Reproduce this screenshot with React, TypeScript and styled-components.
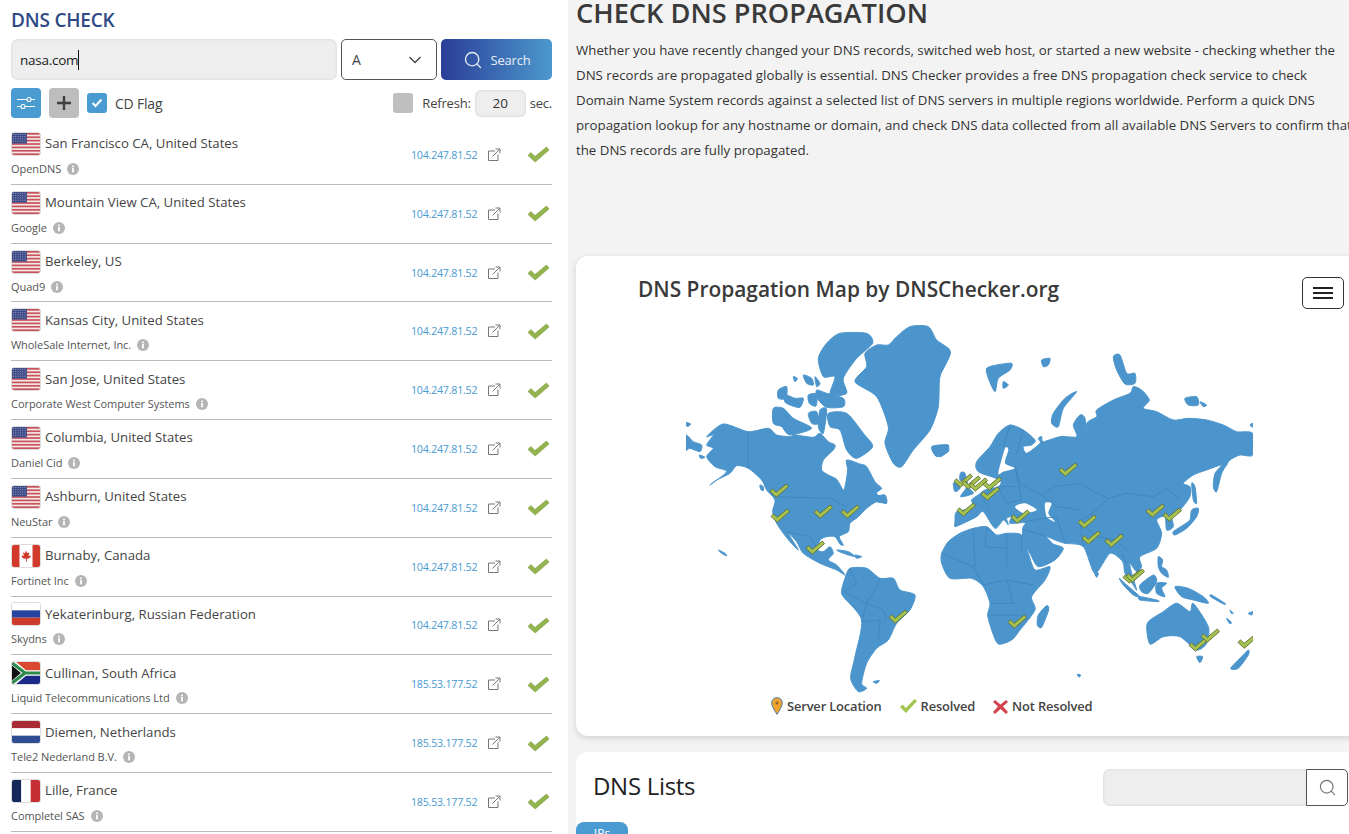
import type { FC } from "react";

import { Search } from "lucide-react";
import styled, { createGlobalStyle } from "styled-components";

const GlobalStyle = createGlobalStyle`
  html, body {
    margin: 0;
    height: 100%;
    overflow: hidden;
    background: #f3f3f3;
    font-family: "Open Sans", "Noto Sans", sans-serif;
    color: #333;
  }
  * { box-sizing: border-box; }
`;

const Page = styled.div`
  display: flex;
  width: 1349px;
  height: 834px;
  overflow: hidden;
`;

const LeftPanel = styled.aside`
  flex: 0 0 568px;
  height: 834px;
  overflow: hidden;
  background: #fff;
  padding: 9px 16px 0 11px;
`;

const CheckTitle = styled.h2`
  margin: 0 0 7px;
  font-size: 19px;
  line-height: 23px;
  font-weight: 600;
  letter-spacing: -0.2px;
  color: #2f4a86;
`;

const SearchBar = styled.div`
  display: flex;
  gap: 4px;
  height: 41px;
`;

const DomainField = styled.div`
  flex: 0 0 326px;
  display: flex;
  align-items: center;
  padding-left: 9px;
  border-radius: 7px;
  background: #eee;
  box-shadow: inset 0 0 3px rgba(0, 0, 0, 0.12);
  font-size: 13.5px;
  letter-spacing: -0.25px;
  color: #222;
`;

const Caret = styled.span`
  width: 1px;
  height: 20px;
  background: #111;
`;

const TypeSelect = styled.div`
  flex: 0 0 96px;
  display: flex;
  align-items: center;
  justify-content: space-between;
  padding: 0 14px 0 10px;
  border: 1px solid #555;
  border-radius: 5px;
  font-size: 14px;
  color: #444;
`;

const SearchButton = styled.button`
  flex: 0 0 111px;
  display: flex;
  align-items: center;
  justify-content: center;
  gap: 8px;
  border: 0;
  border-radius: 5px;
  background: linear-gradient(90deg, #2a3e98, #4c98cd);
  color: #e8eef6;
  font: inherit;
  font-size: 13px;
  letter-spacing: -0.2px;
`;

const OptionsBar = styled.div`
  display: flex;
  align-items: center;
  height: 30px;
  margin-top: 8px;
`;

const SquareButton = styled.div<{ $tone: "blue" | "grey" }>`
  display: flex;
  align-items: center;
  justify-content: center;
  width: 30px;
  height: 30px;
  margin-right: 8px;
  border-radius: 4px;
  background: ${(p) => (p.$tone === "blue" ? "#4a9bd1" : "#bdbdbd")};
`;

const CheckBox = styled.div<{ $checked?: boolean }>`
  display: flex;
  align-items: center;
  justify-content: center;
  width: 20px;
  height: 20px;
  border-radius: 3px;
  background: ${(p) => (p.$checked ? "#4a9bd1" : "#bfbfbf")};
`;

const OptionLabel = styled.span`
  font-size: 13px;
  letter-spacing: -0.2px;
  color: #444;
`;

const FlagLabel = styled(OptionLabel)`
  margin-left: 8px;
  font-size: 14px;
`;

const RefreshGroup = styled.div`
  display: flex;
  align-items: center;
  margin-left: auto;
`;

const RefreshLabel = styled(OptionLabel)`
  margin-left: 9px;
`;

const RefreshInput = styled.div`
  width: 51px;
  height: 27px;
  margin: 0 4px;
  border-radius: 6px;
  background: #eee;
  box-shadow: inset 0 0 3px rgba(0, 0, 0, 0.12);
  font-size: 13.5px;
  line-height: 27px;
  text-align: center;
  color: #333;
`;

const ServerList = styled.div`
  margin-top: 8px;
`;

const ServerRow = styled.div`
  display: grid;
  grid-template-columns: 1fr 77px 40px 25px;
  align-items: center;
  height: 58.82px;
  border-bottom: 1px solid #bbb;
`;

const ServerInfo = styled.div`
  display: flex;
  flex-direction: column;
  gap: 6px;
  margin-top: -2px;
`;

const Location = styled.div`
  display: flex;
  align-items: center;
  gap: 4px;
  height: 24px;
  font-size: 13.2px;
  color: #444;
`;

const LocationText = styled.span`
  margin-top: -1px;
`;

const Provider = styled.div`
  display: flex;
  align-items: center;
  gap: 6px;
  font-size: 11px;
  letter-spacing: -0.05px;
  line-height: 14px;
  color: #555;
`;

const IpAddress = styled.span`
  padding-left: 1px;
  font-size: 10.7px;
  letter-spacing: -0.25px;
  color: #4a9bd1;
`;

const FlagFrame = styled.svg`
  width: 30px;
  height: 24px;
  flex: none;
  border-radius: 3px;
  border: 1px solid #ddd;
`;

const RightPanel = styled.main`
  flex: 1;
  min-width: 0;
  overflow: hidden;
  padding-left: 8px;
`;

const PageTitle = styled.h1`
  margin: -5px 0 0;
  font-size: 27.2px;
  line-height: 36px;
  font-weight: 600;
  white-space: nowrap;
  color: #3a3a3a;
`;

const Intro = styled.p`
  margin: 7px 0 0;
  height: 218px;
  font-size: 13.27px;
  line-height: 25px;
  white-space: nowrap;
  color: #333;
`;

const MapCard = styled.section`
  width: 800px;
  height: 480px;
  border-radius: 12px;
  background: #fff;
  box-shadow: 0 2px 6px rgba(0, 0, 0, 0.14);
`;

const MapHeader = styled.div`
  display: flex;
  align-items: center;
  justify-content: space-between;
  width: 773px;
  height: 69px;
  padding: 0 5px 0 62px;
`;

const MapTitle = styled.h3`
  margin: 0 0 3px;
  font-size: 20.9px;
  font-weight: 600;
  color: #3a3a3a;
`;

const MenuButton = styled.div`
  display: flex;
  flex-direction: column;
  align-items: center;
  justify-content: center;
  gap: 3px;
  width: 42px;
  height: 32px;
  margin-top: 4px;
  border: 1px solid #333;
  border-radius: 5px;
`;

const MenuLine = styled.span`
  width: 20px;
  height: 2px;
  background: #222;
`;

const WorldMap = styled.svg`
  display: block;
  width: 567px;
  height: 370px;
  margin-left: 110px;
`;

const Legend = styled.div`
  display: flex;
  align-items: center;
  height: 22px;
  margin: 0 0 0 195px;
  font-size: 12.9px;
  font-weight: 600;
  letter-spacing: -0.15px;
  color: #444;
`;

const LegendItem = styled.span`
  display: flex;
  align-items: center;
  gap: 4px;
  margin-right: 18px;
  white-space: nowrap;
`;

const ListCard = styled.section`
  width: 800px;
  height: 120px;
  margin-top: 16px;
  border-radius: 12px 12px 0 0;
  background: #fff;
`;

const ListHeader = styled.div`
  display: flex;
  align-items: center;
  justify-content: space-between;
  width: 772px;
  height: 70px;
  padding: 0 0 0 17px;
`;

const ListTitle = styled.h3`
  margin: 0 0 4px;
  font-size: 24px;
  font-weight: 500;
  letter-spacing: -0.3px;
  color: #222;
`;

const ListSearch = styled.div`
  display: flex;
`;

const ListSearchInput = styled.div`
  width: 204px;
  height: 37px;
  border-radius: 7px 0 0 7px;
  background: #eee;
  box-shadow: inset 0 0 3px rgba(0, 0, 0, 0.12);
`;

const ListSearchButton = styled.div`
  display: flex;
  align-items: center;
  justify-content: center;
  width: 42px;
  height: 37px;
  margin-left: -1px;
  border: 1px solid #555;
  border-radius: 0 5px 5px 0;
  color: #777;
`;

const TabButton = styled.div`
  width: 52px;
  height: 30px;
  border-radius: 8px 8px 0 0;
  background: #4a9bd1;
  font-size: 12px;
  line-height: 24px;
  text-align: center;
  color: #fff;
`;

const CHECK_POINTS = "0,8.5 2.8,5.5 7,9.5 18.5,0 21,3 7.2,15";

const ListCheck: FC = () => (
  <svg width="23" height="17" viewBox="-1 -1 23 17">
    <polygon points={CHECK_POINTS} fill="#93b44c" stroke="#7d9a44" strokeWidth="0.6" />
  </svg>
);

const ExternalIcon: FC = () => (
  <svg width="14" height="14" viewBox="0 0 14 14" fill="none" stroke="#777" strokeWidth="1">
    <path d="M8 3H1.5v9.5H11V6.5" />
    <path d="M5.5 8.5L12.5 1.5M8.5 1h4.500v4.500" />
  </svg>
);

const InfoIcon: FC = () => (
  <svg width="12" height="12" viewBox="0 0 12 12">
    <circle cx="6" cy="6" r="6" fill="#b5b5b5" />
    <rect x="5.1" y="5" width="1.8" height="4.3" fill="#fff" />
    <rect x="5.1" y="2.6" width="1.8" height="1.6" fill="#fff" />
  </svg>
);

type FlagCode = "us" | "ca" | "ru" | "za" | "nl" | "fr";

const Flag: FC<{ code: FlagCode }> = ({ code }) => (
  <FlagFrame viewBox="0 0 30 24" preserveAspectRatio="none">
    {code === "us" && (
      <>
        <rect width="30" height="24" fill="#f4e9e9" />
        {[0, 3.7, 7.4, 11.1, 14.8, 18.5, 22.2].map((y) => (
          <rect key={y} y={y} width="30" height="1.85" fill="#c9525a" />
        ))}
        <rect width="16" height="11.5" fill="#3c4a86" />
        {[1.5, 4, 6.5, 9].map((y) => (
          <line key={y} x1="1" x2="15" y1={y} y2={y} stroke="#aab2d2" strokeWidth="1" strokeDasharray="1 1.500" />
        ))}
      </>
    )}
    {code === "ca" && (
      <>
        <rect width="30" height="24" fill="#fff" />
        <rect width="8" height="24" fill="#d23b2c" />
        <rect x="22" width="8" height="24" fill="#d23b2c" />
        <path d="M15 6l1.500 3 2-1-.8 4 1.800-.6.5 1.600-2.500 2-1.500-.2V18h-1v-3.200l-2.200.2-2.500-2 .6-1.600 1.700.6-.7-4 2 1z" fill="#d23b2c" />
      </>
    )}
    {code === "ru" && (
      <>
        <rect width="30" height="8" fill="#fff" />
        <rect y="8" width="30" height="8" fill="#24429e" />
        <rect y="16" width="30" height="8" fill="#cb3a2a" />
      </>
    )}
    {code === "za" && (
      <>
        <rect width="30" height="12" fill="#d9492f" />
        <rect y="12" width="30" height="12" fill="#1b2a86" />
        <path d="M0 0l14 12L0 24z" fill="#111" />
        <path d="M0 0l14 12h16M0 24l14-12" stroke="#fff" strokeWidth="6" fill="none" />
        <path d="M0 1l14 11h16M0 23l14-11" stroke="#2f8a4e" strokeWidth="3.5" fill="none" />
        <path d="M0 5l8 7-8 7z" fill="#111" />
      </>
    )}
    {code === "nl" && (
      <>
        <rect width="30" height="8" fill="#a92b35" />
        <rect y="8" width="30" height="8" fill="#fff" />
        <rect y="16" width="30" height="8" fill="#2f4d92" />
      </>
    )}
    {code === "fr" && (
      <>
        <rect width="10" height="24" fill="#14285c" />
        <rect x="10" width="10" height="24" fill="#fff" />
        <rect x="20" width="10" height="24" fill="#c62f36" />
      </>
    )}
  </FlagFrame>
);

const SERVERS: { city: string; provider: string; ip: string; flag: FlagCode }[] = [
  { city: "San Francisco CA, United States", provider: "OpenDNS", ip: "104.247.81.52", flag: "us" },
  { city: "Mountain View CA, United States", provider: "Google", ip: "104.247.81.52", flag: "us" },
  { city: "Berkeley, US", provider: "Quad9", ip: "104.247.81.52", flag: "us" },
  { city: "Kansas City, United States", provider: "WholeSale Internet, Inc.", ip: "104.247.81.52", flag: "us" },
  { city: "San Jose, United States", provider: "Corporate West Computer Systems", ip: "104.247.81.52", flag: "us" },
  { city: "Columbia, United States", provider: "Daniel Cid", ip: "104.247.81.52", flag: "us" },
  { city: "Ashburn, United States", provider: "NeuStar", ip: "104.247.81.52", flag: "us" },
  { city: "Burnaby, Canada", provider: "Fortinet Inc", ip: "104.247.81.52", flag: "ca" },
  { city: "Yekaterinburg, Russian Federation", provider: "Skydns", ip: "104.247.81.52", flag: "ru" },
  { city: "Cullinan, South Africa", provider: "Liquid Telecommunications Ltd", ip: "185.53.177.52", flag: "za" },
  { city: "Diemen, Netherlands", provider: "Tele2 Nederland B.V.", ip: "185.53.177.52", flag: "nl" },
  { city: "Lille, France", provider: "Completel SAS", ip: "185.53.177.52", flag: "fr" },
];

// map outlines are traced at 3x, so each half sits in its own scaled group
const WEST_LAND = [
  "80,350 130,312 205,335 265,325 290,345 330,350 345,345 400,352 420,340 445,365 465,375 460,390 430,420 425,450 445,465 470,478 490,510 497,490 503,450 500,420 540,432 560,440 585,485 605,505 590,520 620,550 590,545 560,565 535,590 510,610 505,635 478,650 490,675 480,672 465,650 440,650 420,660 413,690 430,695 450,680 460,700 445,720 470,735 495,765 470,750 420,730 370,700 350,665 325,640 355,690 330,665 310,640 290,610 278,575 285,540 260,510 245,480 205,445 170,437 150,460 110,480 90,495 140,455 105,440 80,410 100,385 80,375 100,345",
  "510,745 560,745 600,775 640,775 660,810 705,825 690,870 650,910 625,960 590,985 560,1030 545,1090 560,1105 535,1115 512,1075 525,1010 545,900 490,830 485,810 495,775",
  "525,185 560,140 555,100 590,75 625,75 650,50 690,20 745,20 770,60 810,95 780,170 775,260 750,330 700,390 665,440 640,430 615,370 625,320 590,230",
  "440,70 480,40 560,40 578,70 530,115 490,175 500,220 450,225 465,170 430,170 415,115",
  "445,280 500,280 550,340 578,380 530,415 500,390 480,330 450,320",
  "410,210 440,220 490,235 490,260 440,262 412,235",
  "280,265 310,265 340,295 395,325 330,345 305,320 280,310",
  "295,210 320,200 318,235 295,235",
  "318,225 345,235 370,235 360,262 330,255 314,245",
  "385,225 410,222 408,258 388,250",
  "385,280 410,275 415,310 395,310",
  "420,270 440,268 430,340 415,320",
  "340,170 352,175 345,185",
  "370,165 395,175 400,195 380,190",
  "405,170 420,190 410,200",
  "590,530 615,525 620,548 590,545",
  "240,495 250,500 250,512 242,508",
  "470,690 505,695 525,710 490,700",
  "525,705 545,710 530,715",
  "115,690 135,700 140,708 125,700",
  "580,1085 598,1082 590,1090",
  "755,380 800,375 805,395 770,410",
  "18,345 40,365 65,375 60,395 30,385 18,390",
  "18,308 32,312 22,320",
  "58,405 75,412 62,415",
];

const WEST_BORDERS = [
  "205,335 205,445",
  "285,530 450,535 500,560",
  "320,635 390,650 415,690",
  "510,745 530,790 490,815",
  "490,815 560,850 610,870 620,900",
  "545,905 600,900 595,960",
  "560,850 545,905",
  "600,775 590,800 560,850",
];

const EAST_LAND = [
  "45,545 50,515 100,505 95,480 115,465 135,450 175,440 180,420 115,395 110,365 150,320 175,280 210,255 250,270 285,300 275,315 250,320 260,340 300,310 295,295 305,290 310,305 360,290 410,290 400,255 420,225 435,235 440,300 440,250 470,230 470,210 520,180 570,160 580,140 605,150 628,180 610,205 650,215 700,240 745,235 800,240 850,255 890,275 938,280 938,345 900,345 870,360 860,375 845,400 830,455 820,440 825,400 845,375 800,390 760,405 730,430 750,440 750,470 720,510 695,525 700,560 680,570 675,530 650,540 665,580 650,625 600,650 605,680 590,695 570,670 575,700 590,750 580,735 555,700 548,665 510,640 465,700 430,620 375,610 345,600 320,590 340,612 370,625 345,660 295,680 270,640 250,600 248,565 255,548 210,550 215,530 200,535 205,555 190,540 165,565 130,515 110,530 70,550 45,560",
  "5,640 25,605 60,580 100,565 140,560 170,585 200,580 245,585 265,640 285,690 330,680 315,720 275,770 285,810 240,870 215,900 175,912 155,870 143,825 150,790 130,740 95,715 30,715 5,670",
  "622,850 670,815 710,790 750,815 760,790 805,860 800,910 770,930 720,890 670,890 630,912",
  "62,398 75,400 85,440 100,460 62,470 80,440 60,420",
  "40,430 55,425 60,445 45,455",
  "140,85 170,75 215,70 210,90 175,115 165,155 145,115",
  "190,125 205,135 190,145",
  "305,60 330,55 325,75 310,80",
  "335,250 340,220 375,175 410,155 370,205 355,260",
  "520,50 540,45 560,100 585,100 585,130 555,132 530,90",
  "735,175 770,170 775,195 745,195",
  "780,185 800,195 790,200",
  "930,255 938,250 938,262",
  "755,430 765,440 770,490 760,480",
  "700,575 730,555 750,540 755,510 775,505 770,530 740,565 705,585",
  "463,695 475,700 470,712",
  "655,650 668,660 665,680 680,690 685,712 665,700 655,680",
  "538,715 560,735 600,770 580,765 550,735",
  "600,770 650,780 655,785 600,780",
  "600,735 640,705 650,725 625,760 605,755",
  "650,730 680,730 665,745 675,770 650,760",
  "705,740 745,745 790,770 805,790 760,780 725,770",
  "815,765 855,790 850,792 812,770",
  "870,810 880,820 874,820",
  "860,835 875,848 868,850",
  "925,820 940,815 935,825",
  "770,950 788,950 780,968",
  "872,985 905,950 925,930 925,945 895,985",
  "320,797 326,810 305,862 292,855 295,825",
  "412,1003 422,1005 417,1012",
  "0,30 25,25 30,45 0,100",
  "0,320 25,315 22,335 0,350",
];

// seas cut out of the big land shape
const EAST_WATER = [
  "315,490 335,490 325,520 345,545 320,530",
  "225,500 255,490 290,510 250,520",
  "175,400 195,325 205,330 195,370 225,385 190,395",
];

const EAST_BORDERS = [
  "225,380 240,430 305,465 345,440 420,430 460,455 505,475 560,460 640,470 680,445 720,480",
  "505,475 470,510 420,545 470,590 530,600 560,630",
  "305,465 350,500 420,510",
  "350,530 375,610",
  "420,545 430,620",
  "255,545 345,530",
  "255,570 320,590",
  "175,440 200,490 245,480 225,380",
  "130,480 150,510",
  "180,440 225,440",
  "210,255 190,320",
  "250,270 230,340",
  "545,640 560,670",
  "5,640 100,680 130,735",
  "100,565 105,680",
  "140,560 135,620 200,625",
  "200,580 200,680",
  "245,585 245,640",
  "130,735 200,720 280,735",
  "150,790 230,790",
  "145,825 240,825",
  "200,720 220,790",
];

const MAP_CHECKS: [number, number][] = [
  [779, 491], [780, 516], [823, 512], [850, 512], [815, 548], [898, 617],
  [1068, 470], [963, 481], [971, 483], [978, 485], [992, 484], [990, 494],
  [966, 510], [1020, 517], [1087, 522], [1091, 538], [1114, 541], [1155, 511],
  [1172, 515], [1132, 577], [1135, 576], [1017, 622], [1198, 645], [1210, 636], [1247, 642],
];

// closed catmull-rom through the traced points, so coasts stay where they were traced
const toCoast = (points: string): string => {
  const pts = points.split(" ").map((p) => p.split(",").map(Number));
  const n = pts.length;
  let d = `M${pts[0][0]} ${pts[0][1]}`;
  pts.forEach((p, i) => {
    const prev = pts[(i - 1 + n) % n];
    const next = pts[(i + 1) % n];
    const after = pts[(i + 2) % n];
    const c1x = p[0] + (next[0] - prev[0]) / 8;
    const c1y = p[1] + (next[1] - prev[1]) / 8;
    const c2x = next[0] - (after[0] - p[0]) / 8;
    const c2y = next[1] - (after[1] - p[1]) / 8;
    d += ` C${c1x} ${c1y} ${c2x} ${c2y} ${next[0]} ${next[1]}`;
  });
  return `${d}Z`;
};

const INTRO_LINES = [
  "Whether you have recently changed your DNS records, switched web host, or started a new website - checking whether the",
  "DNS records are propagated globally is essential. DNS Checker provides a free DNS propagation check service to check",
  "Domain Name System records against a selected list of DNS servers in multiple regions worldwide. Perform a quick DNS",
  "propagation lookup for any hostname or domain, and check DNS data collected from all available DNS Servers to confirm that",
  "the DNS records are fully propagated.",
];

const MapHalf: FC<{ x: number; y: number; land: string[]; water?: string[]; borders: string[] }> = ({
  x,
  y,
  land,
  water = [],
  borders,
}) => (
  <g transform={`translate(${x} ${y}) scale(0.3333)`}>
    {land.map((points) => (
      <path key={points} d={toCoast(points)} fill="#4b95cc" stroke="#4b95cc" strokeWidth="3" strokeLinejoin="round" />
    ))}
    {water.map((points) => (
      <path key={points} d={toCoast(points)} fill="#fff" />
    ))}
    {borders.map((points) => (
      <polyline key={points} points={points} fill="none" stroke="#4186c0" strokeWidth="3" />
    ))}
  </g>
);

const App: FC = () => (
  <Page>
    <GlobalStyle />
    <LeftPanel>
      <CheckTitle>DNS CHECK</CheckTitle>
      <SearchBar>
        <DomainField>
          nasa.com
          <Caret />
        </DomainField>
        <TypeSelect>
          A
          <svg width="14" height="8" viewBox="0 0 14 8" fill="none" stroke="#444" strokeWidth="1.4">
            <path d="M1.5 1l5.500 5.500L12.5 1" />
          </svg>
        </TypeSelect>
        <SearchButton>
          <Search size={20} strokeWidth={1.6} />
          Search
        </SearchButton>
      </SearchBar>
      <OptionsBar>
        <SquareButton $tone="blue">
          <svg width="18" height="16" viewBox="0 0 18 16" fill="none" stroke="#fff" strokeWidth="1.1">
            <path d="M0 4.500h10M14 4.500h4M0 11.500h4M8 11.500h10" />
            <circle cx="12" cy="4.5" r="2" />
            <circle cx="6" cy="11.5" r="2" />
          </svg>
        </SquareButton>
        <SquareButton $tone="grey">
          <svg width="14" height="14" viewBox="0 0 14 14">
            <path d="M5.800 0h2.400v5.800H14v2.400H8.200V14H5.800V8.200H0V5.800h5.800z" fill="#3f3f3f" />
          </svg>
        </SquareButton>
        <CheckBox $checked>
          <svg width="12" height="10" viewBox="0 0 12 10" fill="none" stroke="#fff" strokeWidth="2">
            <path d="M1.500 5l3 3 6-6.500" />
          </svg>
        </CheckBox>
        <FlagLabel>CD Flag</FlagLabel>
        <RefreshGroup>
          <CheckBox />
          <RefreshLabel>Refresh:</RefreshLabel>
          <RefreshInput>20</RefreshInput>
          <OptionLabel>sec.</OptionLabel>
        </RefreshGroup>
      </OptionsBar>
      <ServerList>
        {SERVERS.map((server) => (
          <ServerRow key={server.city}>
            <ServerInfo>
              <Location>
                <Flag code={server.flag} />
                <LocationText>{server.city}</LocationText>
              </Location>
              <Provider>
                {server.provider}
                <InfoIcon />
              </Provider>
            </ServerInfo>
            <IpAddress>{server.ip}</IpAddress>
            <ExternalIcon />
            <ListCheck />
          </ServerRow>
        ))}
      </ServerList>
    </LeftPanel>
    <RightPanel>
      <PageTitle>CHECK DNS PROPAGATION</PageTitle>
      <Intro>
        {INTRO_LINES.map((line) => (
          <span key={line}>
            {line}
            <br />
          </span>
        ))}
      </Intro>
      <MapCard>
        <MapHeader>
          <MapTitle>DNS Propagation Map by DNSChecker.org</MapTitle>
          <MenuButton>
            <MenuLine />
            <MenuLine />
            <MenuLine />
          </MenuButton>
        </MapHeader>
        <WorldMap viewBox="686 325 567 370">
          <MapHalf x={680} y={320} land={WEST_LAND} borders={WEST_BORDERS} />
          <MapHalf x={940} y={340} land={EAST_LAND} water={EAST_WATER} borders={EAST_BORDERS} />
          {MAP_CHECKS.map(([x, y]) => (
            <polygon
              key={`${x}-${y}`}
              points={CHECK_POINTS}
              transform={`translate(${x - 9} ${y - 7}) scale(0.88)`}
              fill="#a5c24f"
              stroke="#5e6b38"
              strokeWidth="1"
            />
          ))}
        </WorldMap>
        <Legend>
          <LegendItem>
            <svg width="12" height="18" viewBox="0 0 12 18">
              <path d="M6 .7C2.800.7.7 3 .7 6c0 3.500 3.300 8 5.300 11.300C8 14 11.300 9.500 11.300 6 11.300 3 9.200.7 6 .7z" fill="#f0a22e" stroke="#4a7ea8" strokeWidth="1" />
              <circle cx="6" cy="6" r="1.5" fill="#8a6a3a" />
            </svg>
            Server Location
          </LegendItem>
          <LegendItem>
            <svg width="17" height="14" viewBox="0 0 17 14">
              <path d="M0 8l2.500-2.500L6 9l8.500-9L17 2 6 14z" fill="#a2c650" />
            </svg>
            Resolved
          </LegendItem>
          <LegendItem>
            <svg width="15" height="15" viewBox="0 0 15 15">
              <path d="M2 1l5.500 4.500L13 1l2 2-5 4.500 5 5.500-2 2-5.500-5L2 15l-2-2 5-5.500L0 3z" fill="#d2454c" />
            </svg>
            Not Resolved
          </LegendItem>
        </Legend>
      </MapCard>
      <ListCard>
        <ListHeader>
          <ListTitle>DNS Lists</ListTitle>
          <ListSearch>
            <ListSearchInput />
            <ListSearchButton>
              <Search size={19} strokeWidth={1.5} />
            </ListSearchButton>
          </ListSearch>
        </ListHeader>
        <TabButton>IPs</TabButton>
      </ListCard>
    </RightPanel>
  </Page>
);

export default App;
